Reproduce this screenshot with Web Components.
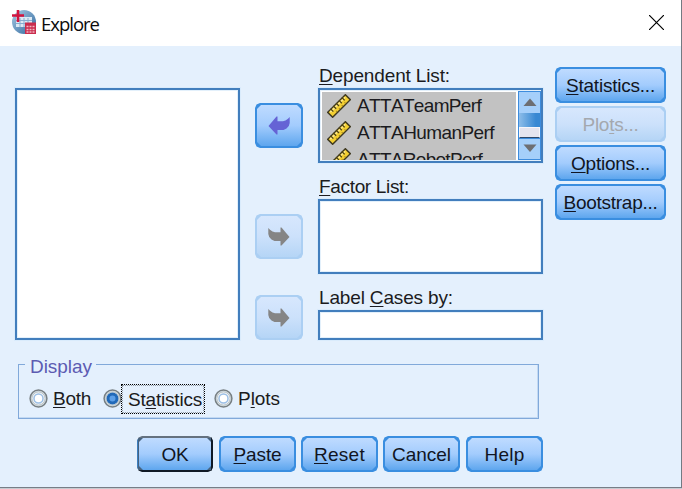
<!DOCTYPE html>
<html lang="en"><head><meta charset="utf-8"><title>Explore</title>
<style>html,body{margin:0;width:682px;height:489px;overflow:hidden;background:#e4f0fd}</style></head>
<body><explore-dialog></explore-dialog>
<script>
const make = (name, html, init) => customElements.define(name, class extends HTMLElement {
  connectedCallback() {
    if (this.shadowRoot) return;
    const t = document.createElement('template');
    t.innerHTML = html;
    this.attachShadow({mode: 'open'}).append(t.content.cloneNode(true));
    if (init) init(this, this.shadowRoot);
  }
});

// Text whose letters are spaced to fill the advance width given in "w".
make('fit-text', `<style>:host{display:inline-block;white-space:pre;line-height:22px;font-kerning:none}
::slotted(u){text-decoration:underline;text-decoration-thickness:1px;text-underline-offset:2px;text-decoration-skip-ink:none}</style><slot></slot>`,
(el) => {
  const w = +el.getAttribute('w'), n = el.textContent.length;
  const natural = el.getBoundingClientRect().width;
  el.style.letterSpacing = ((w - natural) / n).toFixed(3) + 'px';
});

make('push-button', `<style>
:host{display:block;box-sizing:border-box;height:36px;--edge:#3a8ee0;--a:#bfdbff;--b:#a3ccfd;--c:#5ea6ee;color:#111522}
.edge{box-sizing:border-box;width:100%;height:100%;padding:2px;background:var(--edge);clip-path:polygon(5px 0,calc(100% - 5px) 0,calc(100% - 1.5px) 1.5px,100% 5px,100% calc(100% - 5px),calc(100% - 1.5px) calc(100% - 1.5px),calc(100% - 5px) 100%,5px 100%,1.5px calc(100% - 1.5px),0 calc(100% - 5px),0 5px,1.5px 1.5px)}
.face{display:flex;align-items:center;justify-content:center;box-sizing:border-box;padding-top:2px;width:100%;height:100%;background:linear-gradient(var(--a),var(--b) 50%,var(--c));clip-path:polygon(4px 0,calc(100% - 4px) 0,100% 4px,100% calc(100% - 4px),calc(100% - 4px) 100%,4px 100%,0 calc(100% - 4px),0 4px)}
:host([disabled]){--edge:#abcff3;--a:#d7e7fd;--b:#cce1fb;--c:#b5d5f6;color:#a4a8ae}
:host([default]) .edge{background:linear-gradient(90deg,#3c7fc0 0 1px,transparent 1px calc(100% - 2px),#101a26 calc(100% - 2px)),linear-gradient(#64717f 0 2px,#46627f 2px calc(100% - 2px),#101a26 calc(100% - 2px))}
:host([arrow]){height:45px}:host([arrow]) .face{padding:0}
</style><div class="edge"><div class="face"><slot></slot></div></div>`);

make('move-arrow', `<style>:host{display:block;width:22px;height:20px;color:#858585}:host([left]){color:#6563d5;transform:scaleX(-1)}svg{display:block}</style>
<svg width="22" height="20"><path d="M.3 1 2 2.8 4.5 4.600 7 5.200h5.500V.5h1L21.500 10 13.500 18.500h-1V14H6.500L3.500 12.500 1.200 10 .3 7Z" fill="currentColor"/></svg>`);

make('list-box', `<style>:host{display:block;box-sizing:border-box;border:2px solid #427ebd;background:#fff;box-shadow:0 0 0 1px #d9ebfc,inset 0 0 0 1px #e3f0fb;overflow:hidden}</style><slot></slot>`);

make('variable-item', `<style>:host{display:flex;align-items:center;height:27px;padding-left:5px;gap:6px}svg{flex:none}</style>
<svg width="24" height="24" viewBox="0 0 24 24"><g transform="rotate(-45 12 12)"><rect x="-.5" y="8.5" width="25" height="7" fill="#f3cf32" stroke="#3f3920" stroke-width="1.4"/><path d="M1.5 10.2h21" stroke="#ffeb8c" stroke-width="1.5"/><path d="M4 8v4M8 8v4M12 8v4M16 8v4M20 8v4" stroke="#4e4312" stroke-width="1.3"/><path d="M6 14h1M10 14h1M14 14h1M18 14h1" stroke="#a08222" stroke-width="1.3"/></g></svg><slot></slot>`);

make('scroll-bar', `<style>:host{display:flex;flex-direction:column;box-sizing:border-box;width:23px;height:69px;border:1.5px solid #3d8cdd;background:#a5cffa}
.b{height:21px;display:flex;align-items:center;justify-content:center}.track{height:14px;background:linear-gradient(90deg,#8dbde9,#3788d3 80%)}.thumb{height:11px;box-sizing:border-box;background:#e4e4ef;border:1px solid #f5f5fa;border-bottom:1px solid #2d4769}.e{flex:1;padding-bottom:2px;border-top:1px solid #3d8cdd}</style>
<div class="b"><svg width="14" height="9"><path d="M7 .5 13.5 8H.5Z" fill="#6d6e72"/></svg></div><div class="track"></div><div class="thumb"></div><div class="b e"><svg width="14" height="9"><path d="M.5 .5h13L7 8Z" fill="#6d6e72"/></svg></div>`);

make('radio-option', `<style>:host{display:flex;align-items:center;height:31px}svg{flex:none;display:block}.t{margin-left:5px;display:flex}
:host([checked]) .t{margin-left:-1px;box-sizing:border-box;width:84px;height:30px;padding:4px 0 0 6px;border:1px dotted #000;outline:1px dotted #15191f66;outline-offset:-2px}
.dot{fill:#fff;stroke:#9bbfe5}:host([checked]) .dot{fill:#5c9fe8;stroke:#2169b8;stroke-width:3}</style>
<svg width="19" height="19"><circle cx="9.5" cy="9.5" r="8.4" fill="#d6e0e4" stroke="#777f83" stroke-width="1.5"/><circle cx="9.5" cy="9.5" r="6.6" fill="#f3f5f6" stroke="#bac3c7"/><circle class="dot" cx="9.5" cy="9.5" r="4.5" stroke-width="1.5"/></svg><span class="t"><slot></slot></span>`);

make('group-box', `<style>:host{display:block}fieldset{box-sizing:border-box;margin:0;width:521px;height:63px;padding:0 0 0 10px;border:1px solid #81a9da;box-shadow:inset -1px -1px #c3d9f2;min-width:0}
legend{padding:0 4px 0 5px;margin-left:-4px;height:17px;color:#5c5bb2}.row{display:flex;margin-top:10px}</style>
<fieldset><legend><slot name="legend"></slot></legend><div class="row"><slot></slot></div></fieldset>`);

make('app-icon', `<style>:host{display:block;width:24px;height:24px}svg{display:block}</style>
<svg width="24" height="24"><defs><linearGradient id="g" x2="1" y2="1"><stop stop-color="#a9cbe5"/><stop offset="1" stop-color="#2e679d"/></linearGradient></defs><circle cx="12" cy="12" r="12" fill="url(#g)"/><path d="M4 7h16v10H4Z" fill="#dce9f4"/><path d="M4 10.5h16M4 13.5h16M8 8v9M12 8v9M16 8v9" stroke="#86add0"/><path d="M6 0v12M0 5.5h12" stroke="#d3143f" stroke-width="2.6"/><path d="M13 12.5h11V24H13Z" fill="#c92d4d"/><path d="M14.5 16.5h8.5M14.5 19.5h8.5M14.5 22h8.5" stroke="#f3b5c2" stroke-width="1.5" stroke-dasharray="2 1"/></svg>`);

make('title-bar', `<style>:host{display:flex;box-sizing:border-box;height:46px;padding:10px 17px 0 12px;background:#fff;color:#0b0b0b;font:18.5px "Open Sans","Noto Sans",sans-serif}
.t{margin:1px 0 0 5px}.x{margin:5px 0 0 auto}</style>
<app-icon></app-icon><span class="t"><fit-text w="58">Explore</fit-text></span><svg class="x" width="15" height="15"><path d="M0 0 15 15M15 0 0 15" stroke="#000" stroke-width="1.2"/></svg>`);

make('explore-dialog', `<style>
:host{display:block;box-sizing:border-box;width:682px;height:488px;background:#e4f0fd;border-right:1px solid #737a82;border-bottom:1px solid #777e87;box-shadow:0 1px #c6cbd1;font:19px "Liberation Sans",Arial,sans-serif;color:#1b1b20}
.main{display:grid;grid-template-columns:225px 48px 225px 111px;column-gap:15px;padding:21px 0 0 15px;height:273px}
.source{height:252px;margin-top:21px}.arrows{padding-top:36px}.arrows push-button+push-button{margin-top:66px}.arrows push-button+push-button+push-button{margin-top:36px}
.cap{display:flex;align-items:flex-end;box-sizing:border-box;height:36px;padding:0 0 1px 1px}.cap:first-child{height:21px}
.side{display:grid;gap:3px;align-content:start;margin-left:-3px;width:111px}
.dep{display:flex;width:221px;height:71px}.items{box-sizing:border-box;width:194px;height:68px;margin:2px 2px 0 2px;background:#c2c2c2;overflow:hidden}
.scroll{margin-top:1px}
group-box{margin:16px 0 0 18px}.actions{display:flex;margin:17px 0 0 137px}
</style>
<title-bar></title-bar>
<div class="main"><list-box class="source"></list-box>
<div class="arrows"><push-button arrow><move-arrow left></move-arrow></push-button><push-button arrow disabled><move-arrow></move-arrow></push-button><push-button arrow disabled><move-arrow></move-arrow></push-button></div>
<div><div class="cap"><fit-text w="131"><u>D</u>ependent List:</fit-text></div>
<list-box style="height:75px"><div class="dep"><div class="items"><variable-item><fit-text w="124">ATTATeamPerf</fit-text></variable-item><variable-item><fit-text w="137">ATTAHumanPerf</fit-text></variable-item><variable-item><fit-text w="125">ATTARobotPerf</fit-text></variable-item></div><scroll-bar class="scroll"></scroll-bar></div></list-box>
<div class="cap"><fit-text w="90"><u>F</u>actor List:</fit-text></div><list-box style="height:75px"></list-box>
<div class="cap"><fit-text w="134">Label <u>C</u>ases by:</fit-text></div><list-box style="height:30px"></list-box></div>
<div class="side"><push-button><fit-text w="89"><u>S</u>tatistics...</fit-text></push-button><push-button disabled><fit-text w="56">Plo<u>t</u>s...</fit-text></push-button><push-button><fit-text w="79"><u>O</u>ptions...</fit-text></push-button><push-button><fit-text w="94"><u>B</u>ootstrap...</fit-text></push-button></div></div>
<group-box><fit-text slot="legend" w="62">Display</fit-text><radio-option style="width:74px"><fit-text w="38"><u>B</u>oth</fit-text></radio-option><radio-option checked style="width:111px"><fit-text w="74">St<u>a</u>tistics</fit-text></radio-option><radio-option><fit-text w="42">P<u>l</u>ots</fit-text></radio-option></group-box>
<div class="actions"><push-button default style="width:76px"><fit-text w="27">OK</fit-text></push-button><push-button style="width:77px;margin-left:6px"><fit-text w="48"><u>P</u>aste</fit-text></push-button><push-button style="width:77px;margin-left:5px"><fit-text w="51"><u>R</u>eset</fit-text></push-button><push-button style="width:77px;margin-left:5px"><fit-text w="59">Cancel</fit-text></push-button><push-button style="width:77px;margin-left:6px"><fit-text w="40">Help</fit-text></push-button></div>`);
</script></body></html>
